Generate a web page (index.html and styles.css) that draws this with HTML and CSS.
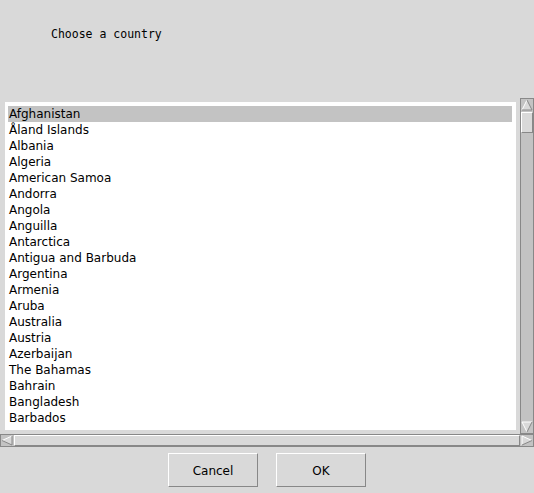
FILE: index.html
```html
<!DOCTYPE html>
<html>
<head>
<meta charset="utf-8">
<link rel="stylesheet" href="styles.css">
</head>
<body>
<div class="header"><span class="label">Choose a country</span></div>
<div class="listarea">
  <div class="listwrap">
    <ul class="listbox">
      <li class="sel">Afghanistan</li>
      <li>Åland Islands</li>
      <li>Albania</li>
      <li>Algeria</li>
      <li>American Samoa</li>
      <li>Andorra</li>
      <li>Angola</li>
      <li>Anguilla</li>
      <li>Antarctica</li>
      <li>Antigua and Barbuda</li>
      <li>Argentina</li>
      <li>Armenia</li>
      <li>Aruba</li>
      <li>Australia</li>
      <li>Austria</li>
      <li>Azerbaijan</li>
      <li>The Bahamas</li>
      <li>Bahrain</li>
      <li>Bangladesh</li>
      <li>Barbados</li>
    </ul>
  </div>
  <div class="vscroll">
    <svg class="arrow" width="12" height="12" viewBox="0 0 12 12"><polygon points="6,1 11,11 1,11" fill="#d9d9d9"/><polyline points="1,11 6,1" stroke="#fff" fill="none"/><polyline points="6,1 11,11 1,11" stroke="#888" fill="none"/></svg>
    <div class="vtrough"><div class="vthumb"></div></div>
    <svg class="arrow" width="12" height="12" viewBox="0 0 12 12"><polygon points="1,1 11,1 6,11" fill="#d9d9d9"/><polyline points="6,11 1,1 11,1" stroke="#fff" fill="none"/><polyline points="11,1 6,11" stroke="#888" fill="none"/></svg>
  </div>
  <div class="hscroll">
    <svg class="arrow" width="12" height="11" viewBox="0 0 12 11"><polygon points="1,5.5 11,1 11,10" fill="#d9d9d9"/><polyline points="11,1 1,5.5" stroke="#fff" fill="none"/><polyline points="1,5.5 11,10 11,1" stroke="#888" fill="none"/></svg>
    <div class="htrough"><div class="hthumb"></div></div>
    <svg class="arrow" width="12" height="11" viewBox="0 0 12 11"><polygon points="1,1 11,5.5 1,10" fill="#d9d9d9"/><polyline points="1,10 1,1 11,5.5" stroke="#fff" fill="none"/><polyline points="11,5.5 1,10" stroke="#888" fill="none"/></svg>
  </div>
</div>
<div class="footer">
  <button class="btn">Cancel</button>
  <button class="btn">OK</button>
</div>
</body>
</html>
```

FILE: styles.css
```css
html, body {
  margin: 0;
  padding: 0;
}
body {
  width: 534px;
  height: 493px;
  background: #d9d9d9;
  font-family: "DejaVu Sans", sans-serif;
  font-size: 12px;
  color: #000;
  overflow: hidden;
}
.header {
  height: 98px;
  box-sizing: border-box;
  padding: 27px 0 0 51px;
}
.label {
  font-family: "DejaVu Sans Mono", monospace;
  font-size: 11.5px;
  line-height: 14px;
}
.listarea {
  display: grid;
  grid-template-columns: 520px 14px;
  grid-template-rows: 336px 13px;
}
.listwrap {
  padding: 4px 4px 4px 5px;
  box-sizing: border-box;
}
.listbox {
  list-style: none;
  margin: 0;
  height: 100%;
  box-sizing: border-box;
  background: #fff;
  padding: 4px 4px 0 3px;
  overflow: hidden;
}
.listbox li {
  height: 16px;
  line-height: 16px;
  padding-left: 1px;
  white-space: nowrap;
}
.listbox li.sel {
  background: #c3c3c3;
}
.vscroll {
  display: flex;
  flex-direction: column;
  background: #c3c3c3;
  border: 1px solid #888;
  box-sizing: border-box;
}
.arrow {
  display: block;
  flex: none;
}
.vtrough {
  flex: 1;
  padding-top: 1px;
}
.vthumb {
  height: 21px;
  background: #d9d9d9;
  border-top: 1px solid #fff;
  border-left: 1px solid #fff;
  border-bottom: 1px solid #888;
  border-right: 1px solid #888;
  box-sizing: border-box;
}
.hscroll {
  grid-column: 1 / 3;
  display: flex;
  background: #c3c3c3;
  border: 1px solid #888;
  box-sizing: border-box;
}
.htrough {
  flex: 1;
  padding: 0 1px;
}
.hthumb {
  height: 100%;
  background: #d9d9d9;
  border-top: 1px solid #fff;
  border-left: 1px solid #fff;
  border-bottom: 1px solid #888;
  border-right: 1px solid #888;
  box-sizing: border-box;
}
.footer {
  display: flex;
  justify-content: center;
  gap: 18px;
  padding-top: 6px;
}
.btn {
  width: 90px;
  height: 34px;
  margin: 0;
  padding: 2px 0 0 0;
  background: #d9d9d9;
  font-family: "DejaVu Sans", sans-serif;
  font-size: 12px;
  color: #000;
  border-top: 1px solid #fff;
  border-left: 1px solid #fff;
  border-bottom: 1px solid #888;
  border-right: 1px solid #888;
}
```
